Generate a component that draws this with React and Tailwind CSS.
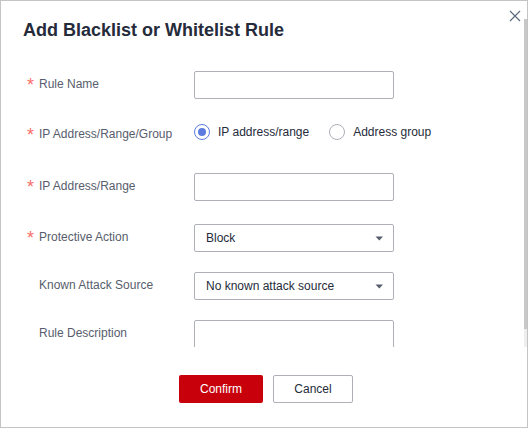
import React from "react";

function Label({ required, children }) {
  return (
    <div className="w-[193px] shrink-0 pl-[26px] pt-[4px] flex items-start text-[12px] leading-[18px] text-[#575d6c]">
      <span className="w-[12px] h-[18px] shrink-0 text-[18px] leading-[20px] text-[#f66f6a]">
        {required ? "*" : ""}
      </span>
      <span>{children}</span>
    </div>
  );
}

function TextBox({ clipped }) {
  return (
    <div
      className={
        "w-[200px] border border-[#adb0b8] rounded-[2px] bg-white " +
        (clipped ? "h-[60px]" : "h-[28px]")
      }
    />
  );
}

function Select({ value }) {
  return (
    <div className="w-[200px] h-[28px] border border-[#adb0b8] rounded-[2px] bg-white flex items-center justify-between pl-[11px] pr-[9px] text-[12px] text-[#252b3a]">
      <span>{value}</span>
      <svg width="9" height="5" viewBox="0 0 9 5">
        <path d="M0.5 0.5 H8 L4.25 4.5 Z" fill="#575d6c" />
      </svg>
    </div>
  );
}

function Radio({ checked, children }) {
  return (
    <div className="flex items-center gap-[8px]">
      <span
        className={
          "w-[16px] h-[16px] rounded-full border flex items-center justify-center bg-white " +
          (checked ? "border-[#5e7ce0]" : "border-[#adb0b8]")
        }
      >
        {checked ? <span className="w-[8px] h-[8px] rounded-full bg-[#5e7ce0]" /> : null}
      </span>
      <span className="text-[12px] leading-[18px] text-[#252b3a]">{children}</span>
    </div>
  );
}

export default function App() {
  return (
    <div className="relative w-[528px] h-[428px] bg-white border border-[#c4c4c4] overflow-hidden font-['Liberation_Sans',Arial,sans-serif]">
      <button className="absolute top-[8px] right-[6px] w-[13px] h-[13px] flex items-center justify-center">
        <svg width="12" height="12" viewBox="0 0 12 12">
          <path d="M1 1 L11 11 M11 1 L1 11" stroke="#5e6a7d" strokeWidth="1.2" />
        </svg>
      </button>

      <div className="absolute right-0 top-[18px] w-[3px] h-[328px] bg-[#eeeeee]">
        <div className="w-[3px] h-[310px] bg-[#c8c8c8]" />
      </div>

      <div className="h-[55px] pt-[18px] pl-[22px]">
        <h1 className="text-[18px] leading-[22px] font-bold text-[#252b3a]">
          Add Blacklist or Whitelist Rule
        </h1>
      </div>

      <div className="h-[291px] overflow-hidden pt-[15px]">
        <div className="flex">
          <Label required>Rule Name</Label>
          <TextBox />
        </div>
        <div className="flex mt-[22px] h-[28px]">
          <Label required>IP Address/Range/Group</Label>
          <div className="pt-[2px] h-[20px] flex items-center gap-[20px]">
            <Radio checked>IP address/range</Radio>
            <Radio>Address group</Radio>
          </div>
        </div>
        <div className="flex mt-[24px]">
          <Label required>IP Address/Range</Label>
          <TextBox />
        </div>
        <div className="flex mt-[23px]">
          <Label required>Protective Action</Label>
          <Select value="Block" />
        </div>
        <div className="flex mt-[20px]">
          <Label>Known Attack Source</Label>
          <Select value="No known attack source" />
        </div>
        <div className="flex mt-[20px]">
          <Label>Rule Description</Label>
          <TextBox clipped />
        </div>
      </div>

      <div className="pt-[28px] pl-[178px] flex gap-[10px]">
        <button className="w-[84px] h-[28px] rounded-[2px] bg-[#c7000b] text-white text-[12px]">
          Confirm
        </button>
        <button className="w-[80px] h-[28px] rounded-[2px] border border-[#adb0b8] bg-white text-[#252b3a] text-[12px]">
          Cancel
        </button>
      </div>
    </div>
  );
}
